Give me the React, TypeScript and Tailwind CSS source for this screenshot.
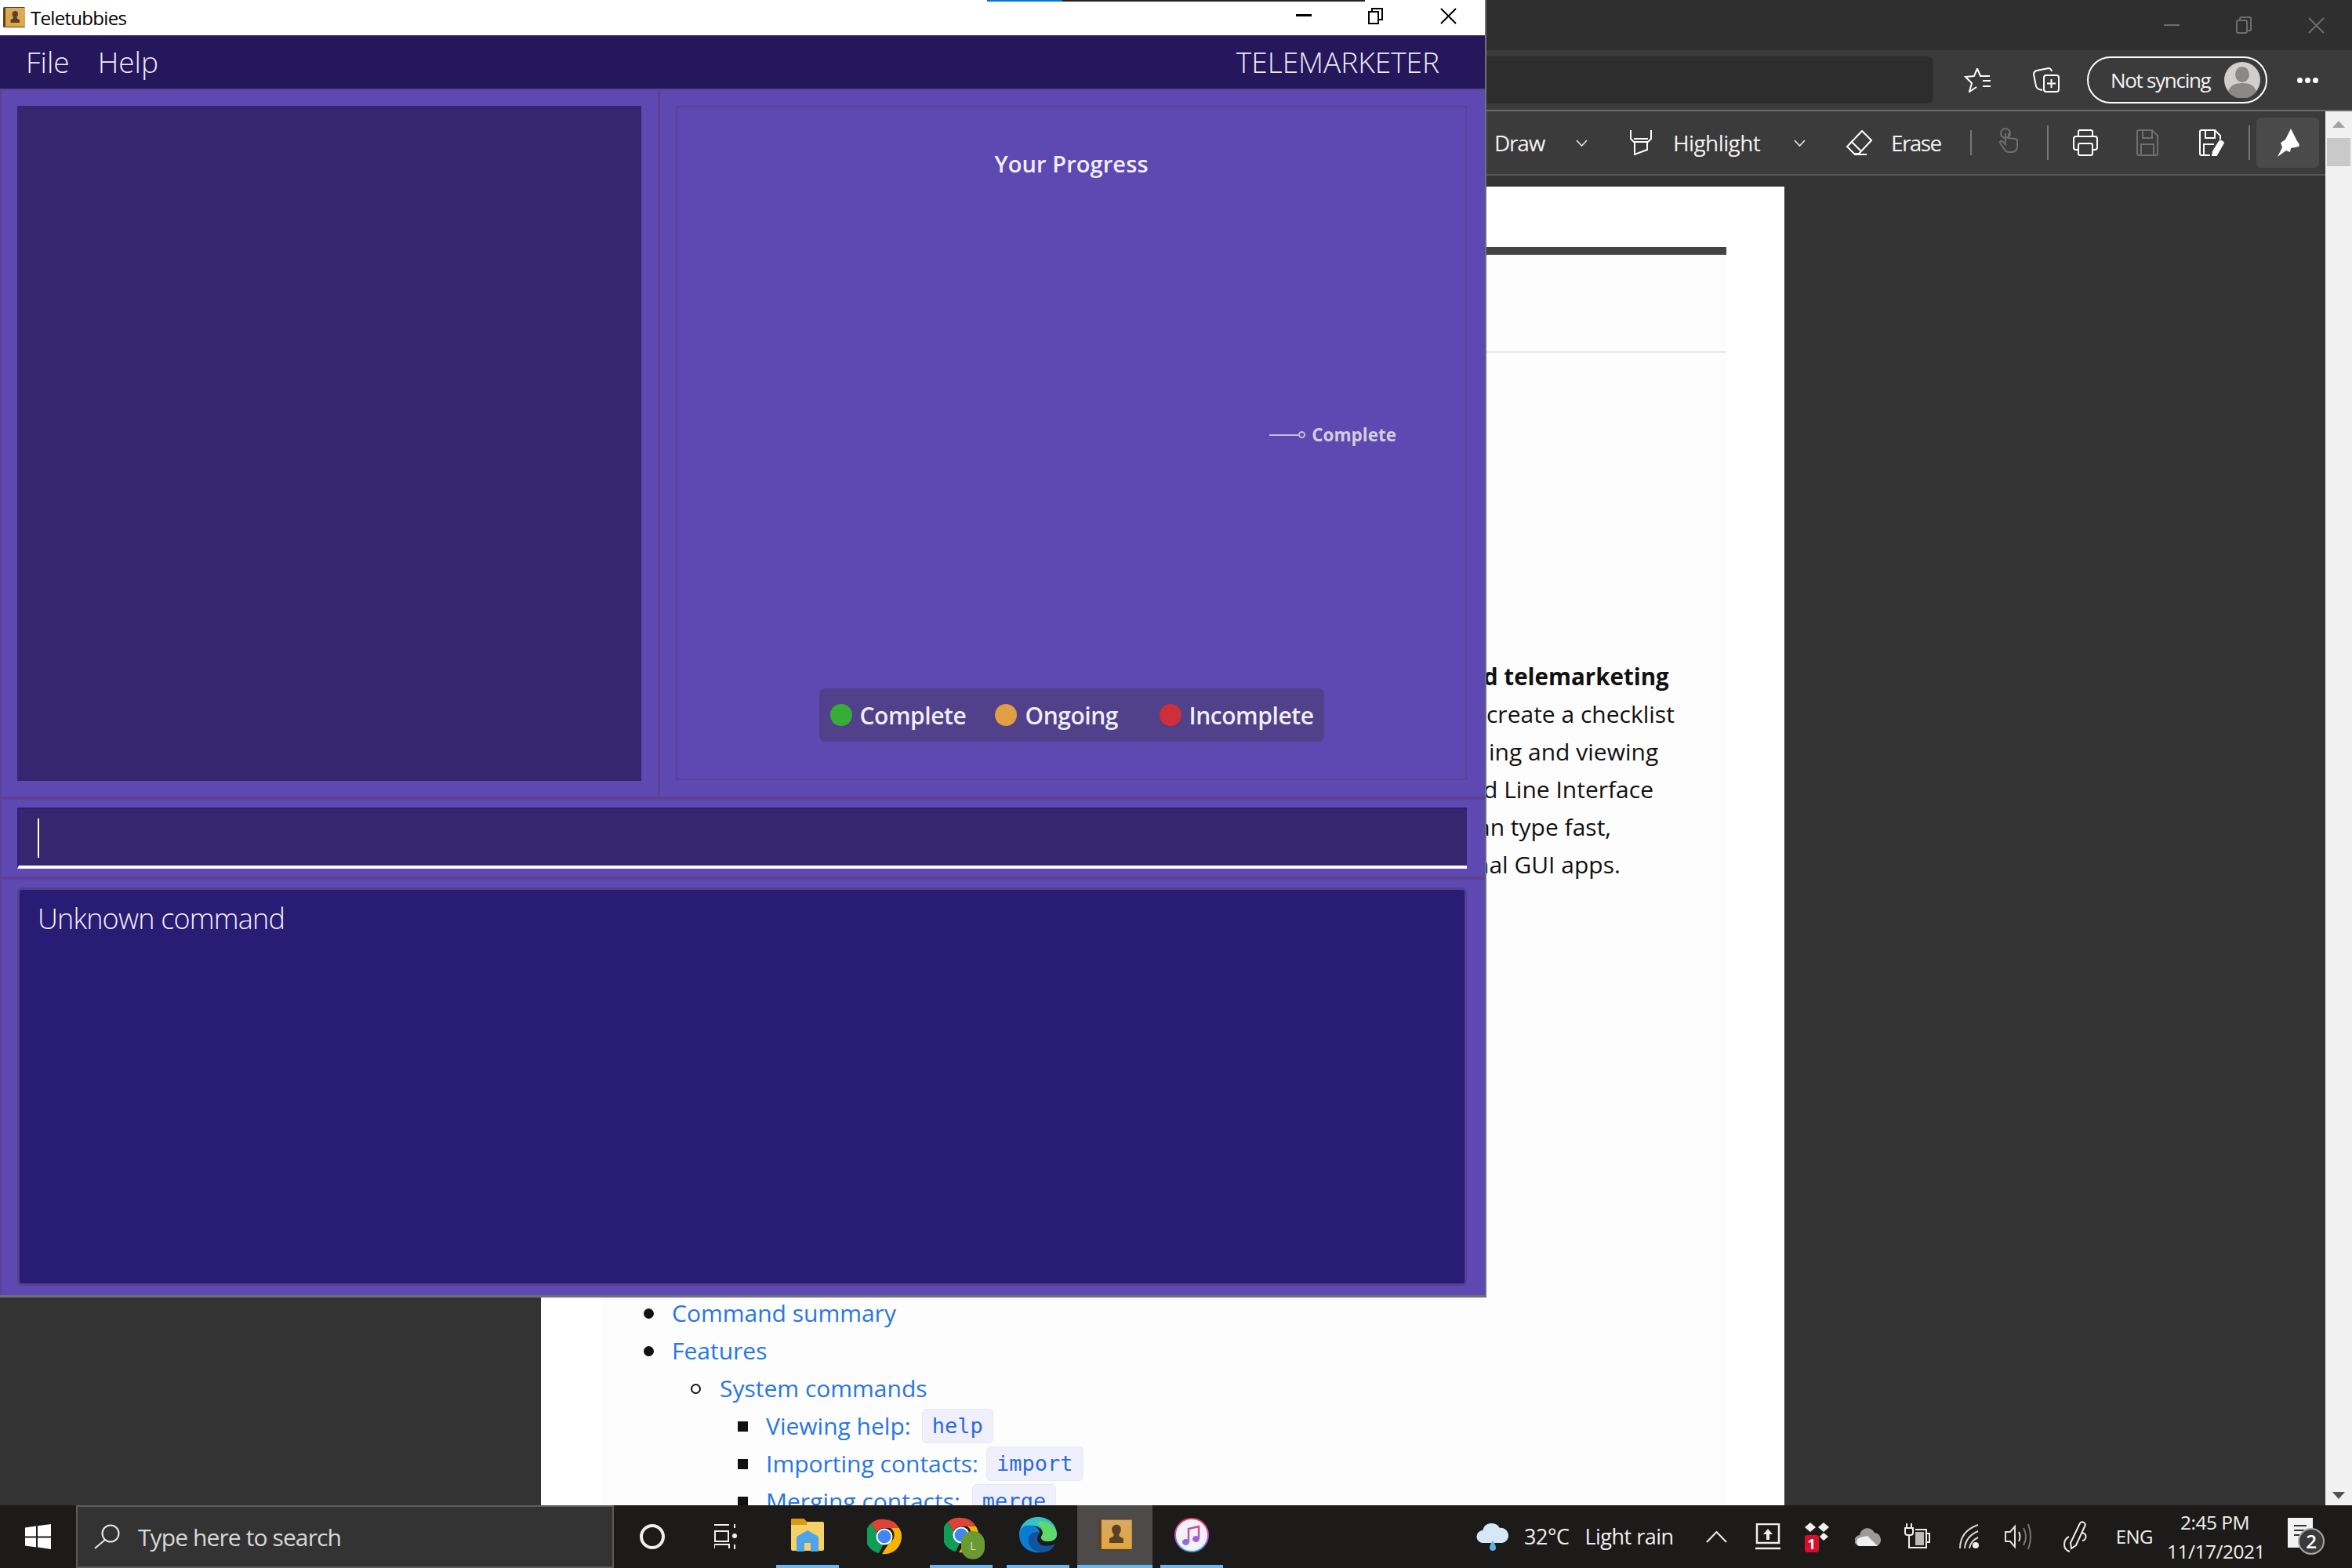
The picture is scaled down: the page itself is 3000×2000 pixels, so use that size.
import React from "react";

const Chev = () => (
  <svg width="15" height="9" viewBox="0 0 15 9" fill="none" stroke="#e8e8e8" strokeWidth="1.6"><path d="M1 1l6.500 7L14 1" /></svg>
);

const Book = ({ w, h }: { w: number; h: number }) => (
  <svg width={w} height={h} viewBox="0 0 28 27">
    <defs>
      <linearGradient id="bk" x1="0" y1="0" x2="0" y2="1">
        <stop offset="0" stopColor="#d9aa63" />
        <stop offset="1" stopColor="#e3a63f" />
      </linearGradient>
    </defs>
    <rect x="0" y="0" width="28" height="26" rx="1.500" fill="#5b4128" />
    <rect x="3" y="1" width="25" height="24" fill="url(#bk)" />
    <path d="M15.500 5c2.200 0 3.500 1.700 3.500 3.800 0 2-1 3-1.500 4.200-.3 1.500 1 2.200 3.500 3.200v3.800H9.500v-3.800c2.500-1 3.800-1.700 3.500-3.200-.5-1.200-1.500-2.200-1.500-4.200C11.500 6.700 13.300 5 15.500 5z" fill="#5a4126" />
  </svg>
);

const Chrome = () => (
  <svg width="44" height="46" viewBox="0 0 44 44">
    <path d="M22 0a22 22 0 0 1 19 11H22a11 11 0 0 0-10 6L5 5a22 22 0 0 1 17-5z" fill="#db4437" />
    <path d="M5 5l10 17a11 11 0 0 0 6 9l-6 12A22 22 0 0 1 5 5z" fill="#0f9d58" />
    <path d="M41 11a22 22 0 0 1-22 33l9-14a11 11 0 0 0 2-19z" fill="#f4b400" />
    <circle cx="22" cy="22" r="10.500" fill="#fff" />
    <circle cx="22" cy="22" r="8.500" fill="#4285f4" />
  </svg>
);

const Tab = ({ w, active, children }: { w: string; active?: boolean; children: React.ReactNode }) => (
  <div className={`${w} ${active ? "bg-[#4c4b49]" : ""} h-full shrink-0 flex items-center justify-center border-b-4 border-[#6db5ee]`}>{children}</div>
);

function Toolbar() {
  return (
    <div className="h-[82px] shrink-0 bg-[#3b3b3b] border-b-2 border-[#555555] flex items-center pl-[1906px] text-[#f2f2f2] text-[28px] tracking-[-0.6px]">
      <div className="w-[104px] shrink-0 leading-none tracking-[-1.2px]">Draw</div>
      <div className="w-[69px] shrink-0"><Chev /></div>
      <div className="w-[55px] shrink-0">
        <svg width="28" height="32" viewBox="0 0 28 32" fill="none" stroke="#fff" strokeWidth="2"><path d="M1 0v11l4 4h18l4-4V0M5 11h18M6 15v16l16-6V15" /></svg>
      </div>
      <div className="w-[154px] shrink-0 leading-none">Highlight</div>
      <div className="w-[66px] shrink-0"><Chev /></div>
      <div className="w-[58px] shrink-0">
        <svg width="34" height="32" viewBox="0 0 34 32" fill="none" stroke="#fff" strokeWidth="2"><path d="M21 1l12 12-16 17h-6l-9-9zM7 14l12 12M11 31h16" /></svg>
      </div>
      <div className="w-[101px] shrink-0 leading-none tracking-[-1.6px]">Erase</div>
      <div className="w-[36px] shrink-0"><div className="w-[2px] h-[32px] bg-[#777777]" /></div>
      <div className="w-[62px] shrink-0 -mt-[6px]">
        <svg width="26" height="32" viewBox="0 0 26 32" fill="none" stroke="#6f6f6f" strokeWidth="2"><circle cx="9" cy="7" r="6" /><path d="M9 7v14l-4-4q-3-1-3 2l6 9q2 3 6 3h3q7 0 7-8v-6q0-3-3-3l-8-1V7" /></svg>
      </div>
      <div className="w-[33px] shrink-0"><div className="w-[2px] h-[44px] bg-[#777777]" /></div>
      <div className="w-[81px] shrink-0">
        <svg width="32" height="34" viewBox="0 0 32 34" fill="none" stroke="#fff" strokeWidth="2"><path d="M7 9V3q0-2 2-2h14q2 0 2 2v6M7 26H4q-3 0-3-3V12q0-3 3-3h24q3 0 3 3v11q0 3-3 3h-3" /><rect x="7" y="18" width="18" height="15" rx="2" /></svg>
      </div>
      <div className="w-[80px] shrink-0">
        <svg width="28" height="34" viewBox="0 0 28 34" fill="none" stroke="#6f6f6f" strokeWidth="2"><path d="M1 3q0-2 2-2h17l7 7v23q0 2-2 2H3q-2 0-2-2zM8 1v10h12V1M6 33V19h16v14" /></svg>
      </div>
      <div className="w-[63px] shrink-0">
        <svg width="33" height="34" viewBox="0 0 33 34" fill="none" stroke="#fff" strokeWidth="2"><path d="M14 33H3q-2 0-2-2V3q0-2 2-2h17l7 7v5M8 1v10h12V1M6 33V19h13" /><path d="M31 17l-9 16-5 1 1-6 8-13q3-1 5 2z" fill="#fff" /></svg>
      </div>
      <div className="w-[10px] shrink-0"><div className="w-[2px] h-[44px] bg-[#777777]" /></div>
      <div className="w-[80px] h-[64px] bg-[#4a4a4a] rounded-md shrink-0 flex items-center justify-center">
        <svg width="33" height="36" viewBox="0 0 33 36" fill="#fff"><path d="M20 0l8 16q4 4 2 7l-10 2-1 5-5-2-11 8 6-12-2-6 6-4z" /></svg>
      </div>
    </div>
  );
}

function EdgeWindow() {
  return (
    <div className="flex-1 min-h-0 flex flex-col overflow-hidden">
      <div className="h-[64px] shrink-0 bg-[#2f2f2f] flex items-center justify-end">
        <div className="w-[20px] h-[2px] bg-[#6e6e6e] mr-[72px]" />
        <svg className="mr-[72px]" width="20" height="22" viewBox="0 0 20 22" fill="none" stroke="#6e6e6e" strokeWidth="2"><rect x="1" y="5" width="13" height="16" rx="2" /><path d="M5 5V3q0-2 2-2h10q2 0 2 2v13q0 2-2 2h-3" /></svg>
        <svg className="mr-[35px]" width="21" height="21" viewBox="0 0 21 21" stroke="#6e6e6e" strokeWidth="2"><path d="M1 1l19 19M20 1L1 20" /></svg>
      </div>
      <div className="h-[78px] shrink-0 bg-[#3b3b3b] border-b-2 border-[#6b6b6b] flex items-start pt-[8px]">
        <div className="w-[2466px] h-[60px] bg-[#2d2d2d] rounded-r-lg shrink-0" />
        <div className="w-[127px] h-[60px] shrink-0 pl-[39px] flex items-center">
          <svg width="36" height="32" viewBox="0 0 36 32" fill="none" stroke="#fff" strokeWidth="2"><path d="M17 1.500L21 11h12M17 1.500L13 11 2 12l8 8-3 11 9-6M24 17h10M24 24h10" /></svg>
        </div>
        <div className="w-[69px] h-[60px] shrink-0 flex items-center">
          <svg width="34" height="32" viewBox="0 0 34 32" fill="none" stroke="#fff" strokeWidth="2"><rect x="14" y="10" width="19" height="21" rx="3" /><path d="M23.500 15v11M18 20.500h11M12 29l-4-1q-3-1-4-4L1 9q0-4 4-5l15-3q3 0 4 4" /></svg>
        </div>
        <div className="w-[230px] h-[60px] shrink-0 border-2 border-white rounded-[30px] flex items-center pl-[28px] justify-between pr-[7px] text-[#f2f2f2] text-[26px] tracking-[-1.3px]">
          <span>Not syncing</span>
          <svg width="46" height="46" viewBox="0 0 46 46"><circle cx="23" cy="23" r="23" fill="#d0cfcb" /><ellipse cx="23" cy="16" rx="9" ry="10" fill="#8b8985" /><path d="M5 38c2-8 9-11 18-11s16 3 18 11a23 23 0 0 1-36 0z" fill="#8b8985" /></svg>
        </div>
        <div className="h-[60px] pl-[38px] flex items-center gap-[3px]">
          <div className="w-[7px] h-[7px] rounded-full bg-white" />
          <div className="w-[7px] h-[7px] rounded-full bg-white" />
          <div className="w-[7px] h-[7px] rounded-full bg-white" />
        </div>
      </div>
      <div className="flex-1 min-h-0 flex">
        <div className="flex-1 min-w-0 flex flex-col bg-[#333333]">
          <Toolbar />
          <div className="flex-1 min-h-0 pt-[14px] pl-[690px] overflow-hidden">
            <div className="w-[1586px] h-full bg-white pl-[77px] pt-[77px] overflow-hidden">
              <div className="w-[1435px] h-full bg-[#fdfdfd] text-[#111111] text-[30px] leading-[48px]">
                <div className="h-[10px] bg-[#444444]" />
                <div className="h-[123px] border-b-2 border-[#e8e8e8] box-content" />
                <div className="h-[389px]" />
                <div className="whitespace-nowrap">
                  <div className="ml-[1125px] font-bold text-[29.5px]">d telemarketing</div>
                  <div className="ml-[1129px]">create a checklist</div>
                  <div className="ml-[1132px]">ing and viewing</div>
                  <div className="ml-[1125px]">d Line Interface</div>
                  <div className="ml-[1117px]">an type fast,</div>
                  <div className="ml-[1114px]">nal GUI apps.</div>
                </div>
                <div className="h-[524px]" />
                <div className="text-[#2a76e0] whitespace-nowrap">
                  <div className="flex items-center ml-[54px]"><div className="w-[13px] h-[13px] rounded-full bg-[#111111] mr-[23px]" />Command summary</div>
                  <div className="flex items-center ml-[54px]"><div className="w-[13px] h-[13px] rounded-full bg-[#111111] mr-[23px]" />Features</div>
                  <div className="flex items-center ml-[114px]"><div className="w-[13px] h-[13px] rounded-full border-2 border-[#111111] mr-[24px]" />System commands</div>
                  <div className="flex items-center ml-[174px]">
                    <div className="w-[13px] h-[13px] bg-[#111111] mr-[23px]" />
                    Viewing help:
                    <code className="ml-[14px] h-[44px] px-[12px] flex items-center rounded-md bg-[#eff0fb] border border-[#e8e8f2] font-['DejaVu_Sans_Mono',monospace] text-[27px] text-[#2a6bd6]">help</code>
                  </div>
                  <div className="flex items-center ml-[174px]">
                    <div className="w-[13px] h-[13px] bg-[#111111] mr-[23px]" />
                    Importing contacts:
                    <code className="ml-[10px] h-[44px] px-[12px] flex items-center rounded-md bg-[#eff0fb] border border-[#e8e8f2] font-['DejaVu_Sans_Mono',monospace] text-[27px] text-[#2a6bd6]">import</code>
                  </div>
                  <div className="flex items-center ml-[174px]">
                    <div className="w-[13px] h-[13px] bg-[#111111] mr-[23px]" />
                    Merging contacts:
                    <code className="ml-[15px] h-[44px] px-[12px] flex items-center rounded-md bg-[#eff0fb] border border-[#e8e8f2] font-['DejaVu_Sans_Mono',monospace] text-[27px] text-[#2a6bd6]">merge</code>
                  </div>
                </div>
              </div>
            </div>
          </div>
        </div>
        <div className="w-[34px] shrink-0 bg-[#f1f1f1] flex flex-col items-center pt-[12px]">
          <div className="w-0 h-0 border-l-[8px] border-r-[8px] border-b-[9px] border-l-transparent border-r-transparent border-b-[#a3a3a3]" />
          <div className="w-[30px] h-[36px] bg-[#c9c9c9] mt-[13px]" />
          <div className="flex-1" />
          <div className="w-0 h-0 border-l-[8px] border-r-[8px] border-t-[9px] border-l-transparent border-r-transparent border-t-[#505050] mb-[8px]" />
        </div>
      </div>
    </div>
  );
}

function Dot({ c }: { c: string }) {
  return <div className={`w-[28px] h-[28px] rounded-full shrink-0 ${c}`} />;
}

function AppWindow() {
  return (
    <div className="absolute left-0 top-0 w-[1896px] h-[1655px] flex flex-col bg-[#5e48b2] border-r-2 border-b-[3px] border-[#6f6f78]">
      <div className="h-[45px] shrink-0 bg-white flex items-center text-black text-[24px] tracking-[-0.7px]">
        <div className="ml-[4px] mr-[7px] flex"><Book w={28} h={27} /></div>
        <span>Teletubbies</span>
        <div className="flex-1" />
        <div className="w-[20px] h-[3px] bg-black mr-[72px] -mt-[6px]" />
        <svg className="mr-[73px] -mt-[4px]" width="19" height="21" viewBox="0 0 19 21" fill="none" stroke="#000" strokeWidth="2"><rect x="1" y="5" width="12" height="15" /><path d="M5 5V1h13v14h-5" /></svg>
        <svg className="mr-[36px] -mt-[4px]" width="21" height="21" viewBox="0 0 21 21" stroke="#000" strokeWidth="2"><path d="M1 1l19 19M20 1L1 20" /></svg>
      </div>
      <div className="h-[68px] shrink-0 bg-[#24175c] flex items-center pl-[33px] pr-[58px] text-[#efedf7] text-[37px] font-light">
        <span className="mr-[36px]">File</span>
        <span>Help</span>
        <div className="flex-1" />
        <span className="text-[37px]">TELEMARKETER</span>
      </div>
      <div className="h-[907px] shrink-0 flex border-t-2 border-b-4 border-l-2 border-[#5b4292]">
        <div className="w-[840px] shrink-0 border-r-[3px] border-[#5b4292] pl-[20px] pr-[21px] pt-[20px] pb-[20px]">
          <div className="h-full bg-[#35266f]" />
        </div>
        <div className="flex-1 pl-[20px] pr-[23px] pt-[20px] pb-[21px]">
          <div className="h-full border-2 border-[#5a4499] flex flex-col items-center">
            <div className="pt-[50px] text-[#f1eff9] text-[29px] leading-[44px] font-semibold tracking-[0.1px]">Your Progress</div>
            <div className="flex-1 self-stretch flex items-center justify-end pr-[88px] text-[#d2cfdc] text-[22.5px] font-bold">
              <div className="w-[37px] h-[2px] bg-[#c4bfd6]" />
              <div className="w-[9px] h-[9px] rounded-full border-2 border-[#c4bfd6] mr-[8px]" />
              <span>Complete</span>
            </div>
            <div className="w-[644px] h-[68px] mb-[47px] rounded-lg bg-[#51408a] flex items-center pl-[14px] text-[#efedf7] text-[30px] font-semibold tracking-[-0.45px]">
              <div className="w-[210px] flex items-center gap-[10px]"><Dot c="bg-[#38ad35]" /><span>Complete</span></div>
              <div className="w-[210px] flex items-center gap-[11px]"><Dot c="bg-[#e09f42]" /><span>Ongoing</span></div>
              <div className="flex items-center gap-[10px]"><Dot c="bg-[#ce2f38]" /><span>Incomplete</span></div>
            </div>
          </div>
        </div>
      </div>
      <div className="h-[102px] shrink-0 border-b-4 border-l-2 border-[#5b4292] pl-[20px] pr-[23px] pt-[10px] pb-[10px]">
        <div className="h-full bg-[#35266f] border-t-2 border-l-2 border-[#2c1f76] border-b-[4px] border-b-white pl-[24px] pt-[12px]">
          <div className="w-[2px] h-[50px] bg-white" />
        </div>
      </div>
      <div className="flex-1 min-h-0 border-l-2 border-[#5b4292] pl-[20px] pr-[23px] pt-[10px] pb-[12px]">
        <div className="h-full bg-[#291c75] border-[3px] border-[#53408f] rounded-[6px] pl-[23px] pt-[12px] text-[#f2f0fa] text-[36px] leading-[50px] font-light tracking-[-0.8px]">
          Unknown command
        </div>
      </div>
      <div className="absolute top-0 left-[1259px] w-[482px] h-[2px] bg-[#222222]">
        <div className="w-[96px] h-[2px] bg-[#0078d4]" />
      </div>
    </div>
  );
}

function Taskbar() {
  return (
    <div className="h-[80px] shrink-0 bg-[#1c1b1a] flex items-center text-[#f0f0f0]">
      <div className="w-[97px] h-full shrink-0 flex items-center justify-center pr-[1px]">
        <svg width="33" height="32" viewBox="0 0 33 32" fill="#fff"><path d="M0 4.500l14-2v13H0zM16 2.200L33 0v15.500H16zM0 17.500h14v12l-14-2zM16 17.500h17V32l-17-2.400z" /></svg>
      </div>
      <div className="w-[686px] h-full shrink-0 bg-[#333333] border-2 border-[#5c5c5c] flex items-center pl-[21px] text-[#d8d8d8] text-[30px] tracking-[-0.9px]">
        <svg className="mr-[23px]" width="33" height="32" viewBox="0 0 33 32" fill="none" stroke="#e8e8e8" strokeWidth="2"><circle cx="21" cy="12" r="10.500" /><path d="M14 20L1 31" /></svg>
        <span>Type here to search</span>
      </div>
      <div className="w-[98px] shrink-0 flex justify-center">
        <div className="w-[32px] h-[32px] rounded-full border-[4px] border-[#f0f0f0]" />
      </div>
      <div className="w-[109px] shrink-0 flex pl-[30px]">
        <svg width="32" height="32" viewBox="0 0 32 32" fill="none" stroke="#f0f0f0" strokeWidth="2"><path d="M0 1h19M0 31V26h19v5M1 9h17v13H1zM26 0v5M26 26v6" /><circle cx="26" cy="15" r="3" fill="#f0f0f0" stroke="none" /></svg>
      </div>
      <div className="h-full flex items-center">
        <Tab w="w-[80px]">
          <svg width="42" height="44" viewBox="0 0 42 44"><path d="M0 3q0-2 2-2h14l4 4h20q2 0 2 2v33q0 2-2 2H2q-2 0-2-2z" fill="#f5d168" /><path d="M0 3q0-2 2-2h14l4 4v4H0z" fill="#d89b10" /><path d="M7 43V24l14-8 14 8v19h-10V32h-8v11z" fill="#4da5e8" /></svg>
        </Tab>
        <div className="w-[116px] h-full shrink-0 flex items-center justify-center"><Chrome /></div>
        <Tab w="w-[80px]">
          <div className="relative flex">
            <Chrome />
            <div className="absolute -right-[8px] bottom-[-8px] w-[30px] h-[36px] rounded-full bg-[#6b9a33] flex items-center justify-center text-[14px] text-[#d8e6c0]">L</div>
          </div>
        </Tab>
        <div className="w-[18px] shrink-0" />
        <Tab w="w-[80px]">
          <svg width="48" height="46" viewBox="0 0 48 46">
            <path d="M24 0c14 0 24 10 24 22 0 6-5 9-11 9-6 0-9-2-9-5 0-2 2-3 2-6 0-5-6-9-14-9C8 11 2 18 0 22 1 10 10 0 24 0z" fill="#35c1c6" />
            <path d="M28 5c10 1 20 8 20 17 0 6-5 9-11 9-6 0-9-2-9-5 0-2 2-3 2-6 0-6-4-11-8-13z" fill="#61d96a" />
            <path d="M0 22c0-7 7-13 16-11 6 1 10 4 10 9-7-2-14 2-14 10 0 8 8 14 17 15C12 47 0 37 0 22z" fill="#0c7bd2" />
            <path d="M26 20c-7-2-14 2-14 10 0 8 8 14 17 15 8 0 14-4 17-11-4 3-14 4-19 1-5-4-5-10-1-15z" fill="#10549e" />
          </svg>
        </Tab>
        <div className="w-[10px] shrink-0" />
        <Tab w="w-[96px]" active>
          <Book w={44} h={42} />
        </Tab>
        <div className="w-[10px] shrink-0" />
        <Tab w="w-[80px]">
          <svg width="44" height="46" viewBox="0 0 44 44">
            <defs>
              <linearGradient id="it" gradientUnits="userSpaceOnUse" x1="22" y1="0" x2="22" y2="44"><stop offset="0" stopColor="#f43b5e" /><stop offset="0.6" stopColor="#b05ad8" /><stop offset="1" stopColor="#38a8f0" /></linearGradient>
            </defs>
            <circle cx="22" cy="22" r="21" fill="#f2f2f4" stroke="url(#it)" strokeWidth="2" />
            <path d="M18 31V14l13-3v16" fill="none" stroke="url(#it)" strokeWidth="2.500" />
            <ellipse cx="14.500" cy="31" rx="4.500" ry="4" fill="url(#it)" />
            <ellipse cx="27.500" cy="27" rx="4.500" ry="4" fill="url(#it)" />
          </svg>
        </Tab>
      </div>
      <div className="flex-1" />
      <div className="flex items-center text-[27px] tracking-[-0.5px] whitespace-nowrap mr-[41px]">
        <svg className="mr-[20px]" width="41" height="38" viewBox="0 0 41 38"><path d="M9 27a8 8 0 0 1-1-16 12 12 0 0 1 22-3 9 9 0 0 1 3 19z" fill="#d4e8f5" /><path d="M21 24q4 6 4 9a4 4 0 0 1-8 0q0-3 4-9z" fill="#5fb0e6" /></svg>
        <span className="mr-[20px]">32°C</span>
        <span>Light rain</span>
      </div>
      <div className="flex items-center shrink-0">
        <svg className="mr-[36px]" width="27" height="15" viewBox="0 0 27 15" fill="none" stroke="#eee" strokeWidth="2"><path d="M1 14L13.500 1 26 14" /></svg>
        <svg className="mr-[31px]" width="32" height="34" viewBox="0 0 32 34" fill="none" stroke="#eee" strokeWidth="2"><path d="M2 1h28v24H2zM0 32h32" strokeWidth="2.500" /><path d="M16 7l6 7h-4v7h-4v-7h-4z" fill="#eee" stroke="none" /></svg>
        <div className="relative w-[32px] h-[36px] mr-[32px]">
          <svg width="32" height="26" viewBox="0 0 32 26" fill="#f0f0f0"><path d="M7 0l7 6-7 6-7-6zM24 0l7 6-7 6-7-6zM24 13l6 5-6 5-5-5z" /></svg>
          <div className="absolute left-0 top-[16px] w-[18px] h-[22px] rounded-[3px] bg-[#d80f2c] text-white text-[18px] leading-[22px] text-center font-bold tracking-normal">1</div>
        </div>
        <svg className="mr-[30px]" width="33" height="24" viewBox="0 0 33 24"><path d="M7 24a7 7 0 0 1-1-14 10 10 0 0 1 19-3 9 9 0 0 1 3 17z" fill="#9a9a9a" /><path d="M5 24a6 6 0 0 1 2-11l9-2 13 13z" fill="#f0f0f0" /></svg>
        <svg className="mr-[37px]" width="33" height="34" viewBox="0 0 33 34" fill="none" stroke="#eee" strokeWidth="2"><path d="M3 0v6M9 0v6M1 6h10v6q0 3-3 3H4q-3 0-3-3zM6 15v17M6 31h22V8H14M29 13h3v11h-3" /><rect x="14" y="11" width="11" height="17" fill="#bbb" stroke="none" /></svg>
        <svg className="mr-[33px]" width="25" height="32" viewBox="0 0 25 32" fill="none" stroke="#d8d8d8" strokeWidth="2"><path d="M1 31Q1 9 24 1M7 31Q8 16 24 9M13 31q1-9 11-14" /><circle cx="21" cy="27" r="4" fill="#eee" stroke="none" /></svg>
        <svg className="mr-[38px]" width="34" height="36" viewBox="0 0 34 36" fill="none" stroke="#e0e0e0" strokeWidth="2"><path d="M1 12h6l6-7v26l-6-7H1z" /><path d="M18 12q3 6 0 12" /><path d="M24 7q6 11 0 22M30 2q6 16 0 32" stroke="#777" /></svg>
        <svg className="mr-[35px]" width="35" height="40" viewBox="0 0 35 40" fill="none" stroke="#eee" strokeWidth="2"><path d="M12 28L24 3q2-3 5-1t1 5L19 31l-6 4zM27 15q6 2 4 7-1 3-4 3M10 20q-6 3-6 10t7 9" /></svg>
        <span className="mr-[18px] text-[24px] tracking-[-0.5px]">ENG</span>
        <div className="w-[122px] text-center text-[24.5px] leading-[37px] tracking-[-0.5px] mr-[32px]">
          <div>2:45 PM</div>
          <div>11/17/2021</div>
        </div>
        <div className="relative w-[47px] h-[48px] mr-[35px]">
          <svg width="32" height="38" viewBox="0 0 32 38" fill="#f2f2f2"><path d="M0 0h32v38H0z" /><path d="M8 10h16M8 16h16M8 22h16" stroke="#333" strokeWidth="2" /></svg>
          <div className="absolute left-[13px] top-[13px] w-[34px] h-[34px] rounded-full bg-[#3a3a3a] border-2 border-[#a8a8a8] text-white text-[24px] leading-[30px] text-center font-semibold tracking-normal">2</div>
        </div>
      </div>
    </div>
  );
}

export default function App() {
  return (
    <div className="relative w-[3000px] h-[2000px] overflow-hidden flex flex-col bg-[#333333] font-['Open_Sans','Noto_Sans',sans-serif]">
      <EdgeWindow />
      <Taskbar />
      <AppWindow />
    </div>
  );
}
